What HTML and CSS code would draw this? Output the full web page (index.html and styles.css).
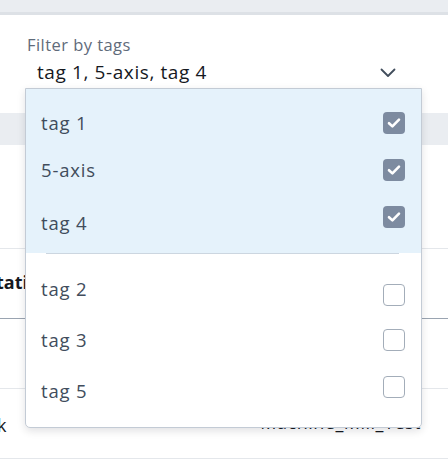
FILE: index.html
```html
<!DOCTYPE html>
<html>
<head>
<meta charset="utf-8">
<link rel="stylesheet" href="styles.css">
</head>
<body>
<div class="page">
  <div class="topbar"></div>
  <div class="filter">
    <div class="filter-label">Filter by tags</div>
    <div class="filter-control">
      <span class="filter-value">tag 1, 5-axis, tag 4</span>
      <svg class="chevron" width="16" height="10" viewBox="0 0 16 10"><path d="M1.5 1.5 L8 8 L14.5 1.5" fill="none" stroke="#414d5c" stroke-width="1.8" stroke-linejoin="round" stroke-linecap="round"/></svg>
    </div>
  </div>
  <div class="band"></div>
  <div class="spacer"></div>
  <div class="trow trow-head"><span class="cell-head">tation</span></div>
  <div class="trow trow-mid"></div>
  <div class="trow trow-last"><span class="cell-k">k</span><span class="cell-name">Machine_Mill_Test</span></div>

  <div class="dropdown">
    <div class="group group-selected">
      <div class="opt"><span class="opt-label">tag 1</span><span class="box checked"><svg width="14" height="12" viewBox="0 0 14 12"><path d="M2 6.2 L5.4 9.4 L12 2.6" fill="none" stroke="#fff" stroke-width="2.6" stroke-linecap="round" stroke-linejoin="round"/></svg></span></div>
      <div class="opt"><span class="opt-label">5-axis</span><span class="box checked b-low1"><svg width="14" height="12" viewBox="0 0 14 12"><path d="M2 6.2 L5.4 9.4 L12 2.6" fill="none" stroke="#fff" stroke-width="2.6" stroke-linecap="round" stroke-linejoin="round"/></svg></span></div>
      <div class="opt"><span class="opt-label l-low3">tag 4</span><span class="box checked"><svg width="14" height="12" viewBox="0 0 14 12"><path d="M2 6.2 L5.4 9.4 L12 2.6" fill="none" stroke="#fff" stroke-width="2.6" stroke-linecap="round" stroke-linejoin="round"/></svg></span></div>
    </div>
    <div class="sep"></div>
    <div class="group group-rest">
      <div class="opt"><span class="opt-label">tag 2</span><span class="box b-low4"></span></div>
      <div class="opt"><span class="opt-label l-low5">tag 3</span><span class="box b-low5"></span></div>
      <div class="opt"><span class="opt-label l-low6">tag 5</span><span class="box b-low5"></span></div>
    </div>
  </div>
</div>
</body>
</html>
```

FILE: styles.css
```css
html, body {
  margin: 0;
  padding: 0;
  background: #ffffff;
}
body {
  font-family: "Open Sans", "Noto Sans", sans-serif;
  width: 448px;
  height: 464px;
  overflow: hidden;
}
.page {
  position: relative;
  width: 448px;
  height: 464px;
  overflow: hidden;
}
.topbar {
  height: 12px;
  background: #eaedf1;
  border-bottom: 3px solid #dde1e6;
}
.filter {
  height: 98px;
  padding-left: 27px;
  padding-right: 52px;
  box-sizing: border-box;
  padding-top: 20px;
}
.filter-label {
  font-size: 16.5px;
  letter-spacing: 0.45px;
  line-height: 20px;
  color: #5f6b7a;
}
.filter-control {
  display: flex;
  align-items: center;
  justify-content: space-between;
  margin-top: 4px;
  padding-left: 10px;
}
.filter-value {
  font-size: 19px;
  letter-spacing: 0.6px;
  line-height: 26px;
  color: #16191f;
}
.chevron {
  display: block;
  margin-top: 2px;
}
.band {
  height: 32px;
  background: #eaedf1;
}
.spacer {
  height: 103px;
  border-bottom: 1px solid #e4e7eb;
}
.trow {
  height: 69px;
  display: flex;
  align-items: center;
  border-bottom: 1px solid #e4e7eb;
  font-size: 18px;
  color: #16191f;
}
.trow-head {
  border-bottom-color: #9aa4b1;
}
.cell-head {
  font-weight: 700;
  margin-left: -4px;
  margin-top: -4px;
}
.trow-last {
  justify-content: space-between;
  align-items: flex-start;
}
.cell-k {
  margin-left: -3px;
  margin-top: 24px;
  line-height: 24px;
}
.cell-name {
  margin-right: 27px;
  margin-top: 21px;
  line-height: 24px;
  letter-spacing: 0.5px;
}
.dropdown {
  position: absolute;
  left: 25px;
  top: 88px;
  width: 397px;
  height: 340px;
  box-sizing: border-box;
  background: #ffffff;
  border: 1px solid #c3cbd5;
  border-radius: 0 0 5px 5px;
  box-shadow: 0 3px 8px rgba(0, 7, 22, 0.12);
  overflow: hidden;
}
.group-selected {
  background: #e5f2fb;
  padding: 11px 0 12px;
}
.group-rest {
  padding: 12px 0 0;
}
.sep {
  height: 1px;
  margin: 0 22px 0 20px;
  background: #ccd6e0;
}
.opt {
  height: 47px;
  display: flex;
  align-items: flex-start;
  justify-content: space-between;
  padding: 0 16px 0 15px;
}
.opt-label {
  font-size: 18.5px;
  letter-spacing: 0.8px;
  line-height: 24px;
  color: #414d5c;
  margin-top: 11px;
}
.box {
  width: 22px;
  height: 22px;
  box-sizing: border-box;
  border-radius: 4px;
  border: 1.5px solid #a3adb9;
  background: #ffffff;
  margin-top: 12px;
  display: flex;
  align-items: center;
  justify-content: center;
}
.box.checked {
  border: none;
  background: #7d8ba0;
}
.l-low3 { margin-top: 17px; }
.l-low5 { margin-top: 15px; }
.l-low6 { margin-top: 19px; }
.b-low1 { margin-top: 12px; }
.b-low4 { margin-top: 18px; }
.b-low5 { margin-top: 16px; }
```
